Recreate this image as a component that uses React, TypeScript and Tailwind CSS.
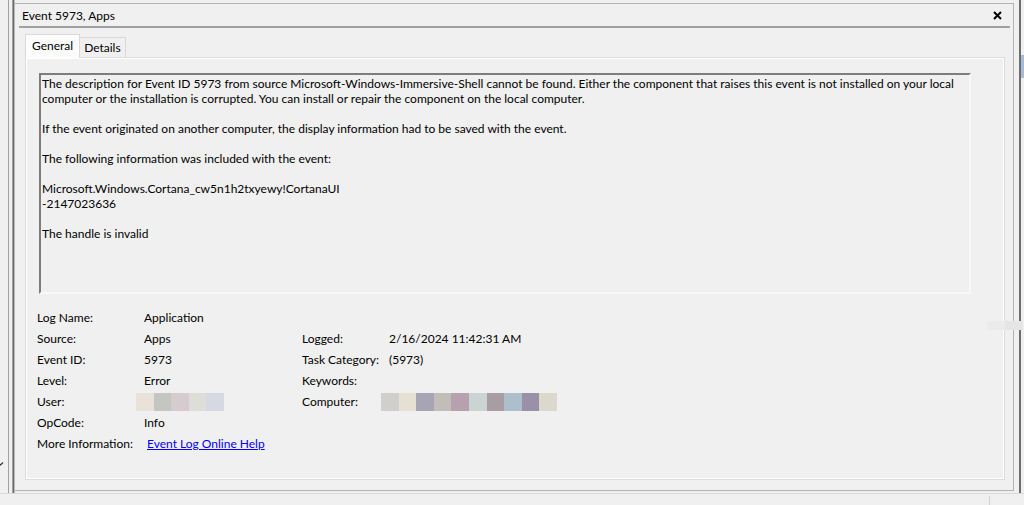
import React from "react";

const font = { fontFamily: '"Segoe UI", Lato, "Noto Sans", sans-serif' };

// pixelated (redacted) blocks shown beside User: and Computer:
const userBlocks = ["#e8e2d8", "#c4c6c2", "#d6cbcf", "#dfddd8", "#d5d9e1"];
const computerBlocks = [
  "#d0cfcd",
  "#e6e0d2",
  "#a7a4b4",
  "#c1bdb8",
  "#b7a1af",
  "#ccd4d3",
  "#a89da3",
  "#aebfcc",
  "#9a90a8",
  "#ddd8cc",
];

function Blocks({ colors }: { colors: string[] }) {
  return (
    <div className="flex h-[18px] -ml-[8px]">
      {colors.map((c, i) => (
        <div key={i} className="w-[17.6px] h-full" style={{ backgroundColor: c }} />
      ))}
    </div>
  );
}

function Row({ label, value, label2, value2 }: { label: string; value: React.ReactNode; label2?: string; value2?: React.ReactNode }) {
  return (
    <div className="grid grid-cols-[107px_158px_87px_1fr] h-[21px] items-center">
      <div>{label}</div>
      <div>{value}</div>
      <div>{label2}</div>
      <div>{value2}</div>
    </div>
  );
}

export default function App() {
  return (
    <div className="w-[1024px] h-[505px] bg-[#f0f0f0] text-black text-[12px] leading-[15px] flex flex-col overflow-hidden relative" style={font}>
      <div className="flex h-[494px] border-b border-[#dadada]">
        {/* left pane edge */}
        <div className="w-[9px] border-r border-[#a0a0a0] relative">
          <svg className="absolute left-[-3px] top-[461px]" width="7" height="6" viewBox="0 0 7 6">
            <path d="M1 1.5 L3.5 4 L6 1.5" stroke="#333" strokeWidth="1.2" fill="none" />
          </svg>
        </div>
        <div className="w-[3px]" />
        {/* splitter */}
        <div className="w-[3px] flex">
          <div className="w-px bg-[#a0a0a0]" />
          <div className="w-px bg-[#696969]" />
          <div className="w-px bg-[#b9b9b9]" />
        </div>

        {/* main panel */}
        <div className="w-[999px] mt-[3px] h-[488px] border-t border-b border-r border-[#b4b4b4] flex flex-col">
          <div className="h-[22px] flex items-center justify-between pl-[7px] pr-[11px]">
            <span>Event 5973, Apps</span>
            <svg width="9" height="9" viewBox="0 0 9 9">
              <path d="M1 1 L8 8 M8 1 L1 8" stroke="#000" strokeWidth="2" />
            </svg>
          </div>
          <div className="h-[2px] ml-[4px] mr-[3px] bg-[#a0a0a0]" />

          <div className="ml-[10px] mr-[8px] mt-[6px] flex flex-col">
            {/* tabs */}
            <div className="flex items-end h-[23px]">
              <div className="h-[24px] px-[6px] pb-[2px] bg-[#fcfcfc] border border-b-0 border-[#d9d9d9] flex items-center relative z-10 -mb-px">
                General
              </div>
              <div className="h-[20px] px-[4px] border border-l-0 border-b-0 border-[#d9d9d9] flex items-center">Details</div>
            </div>

            {/* tab page */}
            <div className="h-[423px] border border-[#dcdcdc] shadow-[inset_0_0_0_1px_#ffffff] pt-[15px] pl-[13px]">
              <div className="w-[932px] h-[221px] border-2 border-t-[#7d7d7d] border-l-[#7d7d7d] border-b-[#f8f8f8] border-r-[#f8f8f8] pt-[1px] pl-px whitespace-nowrap">
                <div>
                  The description for Event ID 5973 from source Microsoft-Windows-Immersive-Shell cannot be found. Either the component that raises this event is not installed on your local
                </div>
                <div>computer or the installation is corrupted. You can install or repair the component on the local computer.</div>
                <div className="h-[15px]" />
                <div>If the event originated on another computer, the display information had to be saved with the event.</div>
                <div className="h-[15px]" />
                <div>The following information was included with the event:</div>
                <div className="h-[15px]" />
                <div>Microsoft.Windows.Cortana_cw5n1h2txyewy!CortanaUI</div>
                <div>-2147023636</div>
                <div className="h-[15px]" />
                <div>The handle is invalid</div>
              </div>

              <div className="mt-[13px] -ml-[2px]">
                <Row label="Log Name:" value="Application" />
                <Row label="Source:" value="Apps" label2="Logged:" value2="2/16/2024 11:42:31 AM" />
                <Row label="Event ID:" value="5973" label2="Task Category:" value2="(5973)" />
                <Row label="Level:" value="Error" label2="Keywords:" />
                <Row label="User:" value={<Blocks colors={userBlocks} />} label2="Computer:" value2={<Blocks colors={computerBlocks} />} />
                <Row label="OpCode:" value="Info" />
                <Row
                  label="More Information:"
                  value={<a className="text-[#0000ff] underline ml-[3px]">Event Log Online Help</a>}
                />
              </div>
            </div>
          </div>
        </div>

        <div className="w-[5px]" />
        <div className="w-[2px] bg-[#6d6d6d]" />
        <div className="w-[3px] relative">
          <div className="absolute top-[55px] left-0 w-[3px] h-[23px] bg-[#a6bcd6]" />
        </div>
      </div>

      {/* status bar */}
      <div className="h-[11px] flex">
        <div className="w-[989px]" />
        <div className="w-px mt-[2px] bg-[#d0d0d0]" />
      </div>

      {/* faint leftover block on the right edge */}
      <div className="absolute left-[987px] top-[321px] h-[9px] flex">
        <div className="w-[18px] bg-[#ebebeb]" />
        <div className="w-[18px] bg-[#e5e5e5]" />
      </div>
    </div>
  );
}
